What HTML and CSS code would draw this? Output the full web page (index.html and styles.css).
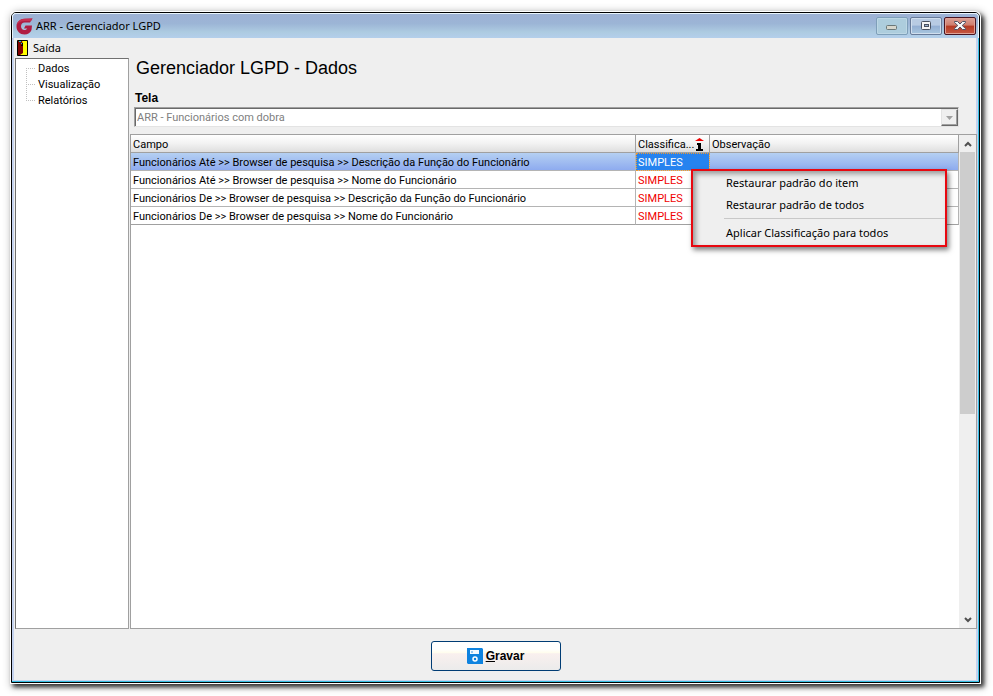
FILE: index.html
```html
<!DOCTYPE html>
<html lang="pt-BR">
<head>
<meta charset="utf-8">
<title>ARR - Gerenciador LGPD</title>
<link rel="stylesheet" href="styles.css">
</head>
<body>
<div class="window">
  <header class="titlebar">
    <svg class="logo" viewBox="0 0 17 17" aria-hidden="true"><path d="M16.500 .5 14 4.500H8.500C6.500 4.500 5 6.200 5 8.300s1.500 3.700 3.500 3.700c1.300 0 2.300-.6 2.800-1.500H8l1.500-3H16l-.5 4.500c-.8 2.600-3.600 4.500-7 4.500C4 16.500.5 13 .5 8.500S4 .8 9 .8z" fill="#b01c42"/><path d="M.8 7C1.500 3.500 4.500.8 9 .8L16.500.5 15 3 8.500 3C5 3 2.500 4.500.8 7z" fill="#c83052"/></svg>
    <h1 class="caption">ARR - Gerenciador LGPD</h1>
    <div class="controls">
      <button class="control minimize" type="button" aria-label="Minimizar"><svg viewBox="0 0 12 10"><rect x=".5" y="4.500" width="10" height="4" rx="1" fill="#d6d6cc" stroke="#697777"/></svg></button>
      <button class="control" type="button" aria-label="Maximizar"><svg viewBox="0 0 12 10"><rect x="1.500" y=".5" width="9" height="8" rx="1" fill="#f5f5f5" stroke="#4a5260"/><rect x="4.500" y="3.500" width="4" height="2" fill="#9bb1d0" stroke="#4a5260"/></svg></button>
      <button class="control close" type="button" aria-label="Fechar"><svg viewBox="0 0 12 10"><path d="M.5.5h3L6 3 8.500.5h3v1L8.200 4.500l3.300 3v1h-3L6 6 3.500 8.500h-3v-1l3.300-3L.5 1.500z" fill="#f8f8f8" stroke="#505365"/></svg></button>
    </div>
  </header>
  <nav class="menubar">
    <button class="menu-item" type="button"><svg class="door" viewBox="0 0 11 16" aria-hidden="true"><path d="M.5.5h10v15H.5z" fill="#ff0" stroke="#000"/><path d="M1 1h4l1 3v9l-3 2H1z" fill="#800000"/><path d="M2 1h2v1H2zM4 3h1v1H4z" fill="#00d8d8"/><path d="M5.500 3v3M4 5.500h1" stroke="#000"/></svg>Saída</button>
  </nav>
  <main class="workspace">
    <aside class="sidebar">
      <ul class="tree">
        <li><a href="#dados">Dados</a></li>
        <li><a href="#visualizacao">Visualização</a></li>
        <li><a href="#relatorios">Relatórios</a></li>
      </ul>
    </aside>
    <section class="content" id="dados">
      <h2 class="heading">Gerenciador LGPD - Dados</h2>
      <label class="label" for="tela">Tela</label>
      <div class="combo">
        <select id="tela" disabled><option>ARR - Funcionários com dobra</option></select>
        <span class="drop"><svg viewBox="0 0 7 4" aria-hidden="true"><path d="M0 0h7L3.500 4z" fill="#a0a0a0"/></svg></span>
      </div>
      <div class="grid">
        <div class="records">
          <table>
            <colgroup><col><col class="col-class"><col class="col-note"></colgroup>
            <thead><tr><th>Campo</th><th><span class="sorted">Classifica... <svg viewBox="0 0 9 14" aria-label="1"><path d="M4.500 0 9 3H0z" fill="#f00000"/><path d="M2 5h4v6h2v2H1v-2h2V7H2z" fill="#000"/></svg></span></th><th>Observação</th></tr></thead>
            <tbody>
              <tr class="selected"><td>Funcionários Até &gt;&gt; Browser de pesquisa &gt;&gt; Descrição da Função do Funcionário</td><td>SIMPLES</td><td></td></tr>
              <tr><td>Funcionários Até &gt;&gt; Browser de pesquisa &gt;&gt; Nome do Funcionário</td><td>SIMPLES</td><td></td></tr>
              <tr><td>Funcionários De &gt;&gt; Browser de pesquisa &gt;&gt; Descrição da Função do Funcionário</td><td>SIMPLES</td><td></td></tr>
              <tr><td>Funcionários De &gt;&gt; Browser de pesquisa &gt;&gt; Nome do Funcionário</td><td>SIMPLES</td><td></td></tr>
            </tbody>
          </table>
          <div class="context" role="menu">
            <button type="button" role="menuitem">Restaurar padrão do item</button>
            <button type="button" role="menuitem">Restaurar padrão de todos</button>
            <hr>
            <button type="button" role="menuitem">Aplicar Classificação para todos</button>
          </div>
        </div>
        <div class="scrollbar">
          <button type="button" aria-label="Rolar para cima"><svg viewBox="0 0 8 6"><path d="M1 5 4 2l3 3" /></svg></button>
          <div class="track"><div class="thumb"></div></div>
          <button type="button" aria-label="Rolar para baixo"><svg viewBox="0 0 8 6"><path d="M1 1l3 3 3-3" /></svg></button>
        </div>
      </div>
    </section>
  </main>
  <footer class="footer">
    <button class="save" type="button"><svg viewBox="0 0 16 16" aria-hidden="true"><path d="M0 0h15l1 1v15H1l-1-1z" fill="#0f83df"/><path d="M3 2h9v4H3z" fill="#f4faff"/><path d="M4 3h2v2H4z" fill="#9acbf1"/><circle cx="8" cy="11" r="2" fill="none" stroke="#fff" stroke-width="1.500"/></svg><span><u>G</u>ravar</span></button>
  </footer>
</div>
</body>
</html>
```
FILE: styles.css
```css
* { box-sizing: border-box; }

body {
  margin: 0;
  min-height: 100vh;
  padding: 10px 11px 11px 10px;
  display: flex;
  background: #fff;
  color: #000;
  font: 11px/14px Roboto, "Liberation Sans", sans-serif;
}

button { font: inherit; color: inherit; padding: 0; border: 0; background: none; }
svg { display: block; }

.window {
  flex: 1;
  display: flex;
  flex-direction: column;
  margin: 2px 2px 2px 1px;
  border: 1px solid #000;
  border-radius: 5px 5px 0 0;
  background: #efefef;
  box-shadow:
    inset -1px -1px #35bfe3,
    inset 2px -2px #c4d2ee,
    inset -3px 0 #c4d2ee,
    0 0 0 1px #fff,
    3px 3px 4px 1px rgba(0, 0, 0, .75),
    2px 2px 9px 2px rgba(0, 0, 0, .3);
  padding: 0 3px 2px;
}

.titlebar {
  display: flex;
  align-items: center;
  height: 25px;
  margin: 0 -3px;
  padding: 0 3px;
  gap: 3px;
  border-radius: 4px 4px 0 0;
  border: 1px solid #e8f4fc;
  border-width: 1px 1px 0;
  background: linear-gradient(#9db1d4, #9cb5d6 40%, #adcbe1 75%, #b4cfeb);
}
.logo { width: 17px; height: 17px; }
.caption { flex: 1; margin: 0; font: 11px/16px "Noto Sans", sans-serif; }
.controls { display: flex; gap: 2px; margin-right: -1px; }
.control {
  width: 32px;
  height: 18px;
  display: grid;
  place-items: center;
  border: 1px solid #687b99;
  border-radius: 2px;
  background: linear-gradient(#b8cbe3 45%, #93aed3 50%, #a9c7df);
  box-shadow: inset 0 0 0 1px #d0deee;
}
.control svg { width: 12px; height: 10px; }
.minimize { border-color: #7e9fb9; background: #adcddd; box-shadow: inset 0 0 0 1px #bdd7e5; }
.close {
  border-color: #481421;
  background: linear-gradient(#dba095, #cf7d6d 45%, #b43a23 50%, #c65843);
  box-shadow: inset 0 0 0 1px #dfa195;
}

.menubar { height: 20px; }
.menu-item { display: flex; align-items: center; height: 20px; gap: 5px; padding-left: 2px; font: 11px/16px "Noto Sans", sans-serif; }
.door { width: 11px; height: 16px; }

.workspace { flex: 1; display: flex; gap: 1px; }
.sidebar { width: 114px; border: 1px solid #a0a0a0; border-top-color: #707070; border-left-color: #707070; background: #fff; }
.tree { list-style: none; margin: 1px 0 0 10px; padding: 0; }
.tree li { height: 16px; display: flex; align-items: center; background: repeating-linear-gradient(#c0c0c0 0 1px, transparent 1px 2px) 0 0 / 1px 100% no-repeat; }
.tree li::before { content: ""; width: 10px; height: 1px; margin-right: 2px; background: repeating-linear-gradient(90deg, #c0c0c0 0 1px, transparent 1px 2px); }
.tree li:first-child { background-size: 1px 50%; background-position: 0 100%; }
.tree li:last-child { background-size: 1px 50%; }
.tree a { padding-top: 2px; color: inherit; text-decoration: none; }

.content { flex: 1; min-width: 0; display: flex; flex-direction: column; }
.heading { margin: 0 0 11px 6px; font: 18px/20px "Liberation Sans", Arial, sans-serif; }
.label { margin: 0 0 0 5px; font: bold 12px/18px "Liberation Sans", Arial, sans-serif; }
.combo {
  display: flex;
  height: 20px;
  margin: 0 17px 7px 4px;
  background: #fff;
  border: 1px solid #e3e3e3;
  border-top-color: #a0a0a0;
  border-left-color: #a0a0a0;
  box-shadow: inset 1px 1px #696969;
}
.combo select { flex: 1; min-width: 0; appearance: none; border: 0; padding: 2px 2px 0; background: transparent; color: #808080; opacity: 1; font: inherit; }
.drop { width: 17px; margin-top: 1px; display: grid; place-items: center; background: #efefef; border: 1px solid #e3e3e3; border-right-color: #696969; border-bottom-color: #696969; box-shadow: inset -1px -1px #a0a0a0; }
.drop svg { width: 7px; height: 4px; }

.grid { flex: 1; display: flex; border: 1px solid #a0a0a0; background: #fff; margin-right: -1px; }
.records { flex: 1; min-width: 0; position: relative; }
table { width: 100%; border-collapse: separate; border-spacing: 0; table-layout: fixed; }
.col-class { width: 74px; }
.col-note { width: 249px; }
th, td { height: 18px; padding: 2px 2px 0; text-align: left; font-weight: normal; line-height: 14px; white-space: nowrap; border-right: 1px solid #b4b4b4; border-bottom: 1px solid #b4b4b4; }
th { background: linear-gradient(#fff, #f2f2f2 50%, #dedede); border-right-color: #a0a0a0; border-bottom-color: #a0a0a0; }
tr:last-child td { border-bottom-color: #a0a0a0; }
td:nth-child(2) { color: #f00000; }
.sorted { display: flex; justify-content: space-between; align-items: center; padding-right: 3px; }
.sorted svg { width: 9px; height: 14px; }
.selected td { background: linear-gradient(#b5d0f2, #8eabef); }
.selected td:nth-child(2) { background: #2683ef; color: #fff; outline: 1px dotted #f09a30; outline-offset: -1px; }

.scrollbar { width: 17px; display: flex; flex-direction: column; background: #efefef; }
.scrollbar button { height: 17px; display: grid; place-items: center; }
.scrollbar svg { width: 8px; height: 6px; fill: none; stroke: #505050; stroke-width: 2; }
.track { flex: 1; }
.thumb { height: 57%; margin: 0 1px; background: #cdcdcd; }

.context {
  position: absolute;
  top: 34px;
  right: 12px;
  width: 256px;
  padding: 1px 0 1px 31px;
  border: 2px solid #e80810;
  background: #efefef;
  box-shadow: inset 3px 3px 5px rgba(0, 0, 0, .35), 2px 3px 5px rgba(0, 0, 0, .5);
  font: 11px/22px "Noto Sans", sans-serif;
}
.context button { display: block; width: 100%; height: 22px; padding-left: 2px; text-align: left; }
.context hr { margin: 2px 0 3px; border: 0; border-top: 1px solid #c8c8c8; }

.footer { display: flex; justify-content: center; padding: 12px 0 9px; }
.save {
  width: 130px;
  height: 30px;
  display: flex;
  align-items: center;
  justify-content: center;
  gap: 3px;
  border: 1px solid #003c74;
  border-radius: 3px;
  background: linear-gradient(#fff 25%, #fffdee 38%, #f9f0ee 42%, #ebebeb);
  font: bold 12px/16px "Liberation Sans", Arial, sans-serif;
}
.save svg { width: 16px; height: 16px; }
```
